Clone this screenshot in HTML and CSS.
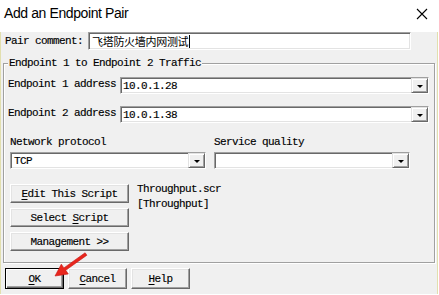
FILE: index.html
```html
<!DOCTYPE html>
<html lang="en">

<head>
    <meta charset="UTF-8">
    <meta name="viewport" content="width=device-width, initial-scale=1.0">
    <title>Add an Endpoint Pair</title>
    <link rel="stylesheet" href="styles.css">
</head>

<body>
    <div class="window">
        <div class="titlebar">
            <span class="title">Add an Endpoint Pair</span>
            <svg class="close" width="12" height="12" viewBox="0 0 12 12">
                <path d="M1 1 L11 11 M11 1 L1 11" stroke="#000" stroke-width="1.1" fill="none" />
            </svg>
        </div>

        <div class="client">
            <div class="comment-row">
                <span class="comment-label">Pair comment:</span>
                <div class="edit">
                    <span class="cjk">飞塔防火墙内网测试</span><span class="caret"></span>
                </div>
            </div>

            <div class="group">
                <span class="group-title">Endpoint 1 to Endpoint 2 Traffic</span>

                <div class="addr-row first">
                    <span class="addr-label">Endpoint 1 address</span>
                    <div class="combo addr-combo">
                        <span class="value">10.0.1.28</span>
                        <span class="drop"><i></i></span>
                    </div>
                </div>
                <div class="addr-row">
                    <span class="addr-label">Endpoint 2 address</span>
                    <div class="combo addr-combo">
                        <span class="value">10.0.1.38</span>
                        <span class="drop"><i></i></span>
                    </div>
                </div>

                <div class="proto-row">
                    <div class="field">
                        <span class="field-label">Network protocol</span>
                        <div class="combo">
                            <span class="value">TCP</span>
                            <span class="drop"><i></i></span>
                        </div>
                    </div>
                    <div class="field">
                        <span class="field-label">Service quality</span>
                        <div class="combo">
                            <span class="value"></span>
                            <span class="drop"><i></i></span>
                        </div>
                    </div>
                </div>

                <div class="script-row">
                    <div class="script-buttons">
                        <button class="btn"><u>E</u>dit This Script</button>
                        <button class="btn">Select <u>S</u>cript</button>
                        <button class="btn">Management &gt;&gt;</button>
                    </div>
                    <div class="script-info">
                        <div>Throughput.scr</div>
                        <div>[Throughput]</div>
                    </div>
                </div>
            </div>

            <div class="footer">
                <button class="btn big default"><u>O</u>K</button>
                <button class="btn big"><u>C</u>ancel</button>
                <button class="btn big"><u>H</u>elp</button>
            </div>
        </div>

        <!-- red pointer drawn over the dialog -->
        <svg class="arrow" width="439" height="295" viewBox="0 0 439 295">
            <polygon points="86.9,255.2 85.1,252.8 63.9,267.9 61.3,264.2 55,276 68.3,274 65.7,270.3"
                fill="#e8261d" stroke="#c81410" stroke-width="0.6" stroke-linejoin="round" />
        </svg>
    </div>
</body>

</html>
```

FILE: styles.css
```css
body {
    margin: 0;
    background: #fff;
    font-family: "Liberation Mono", "DejaVu Sans Mono", monospace;
    font-size: 11px;
    letter-spacing: -0.6px;
    color: #000;
    -webkit-text-stroke: 0.15px #000;
}

.window {
    position: relative;
    width: 438px;
    height: 294px;
}

.titlebar {
    height: 26px;
    display: flex;
    align-items: center;
    justify-content: space-between;
    padding: 0 10px 0 4px;
    background: #fff;
}

.title {
    font-family: "Liberation Sans", Arial, sans-serif;
    font-size: 14px;
    letter-spacing: -0.4px;
    line-height: 16px;
    -webkit-text-stroke: 0;
}

.close {
    display: block;
    margin-top: 1px;
}

.client {
    height: 267px;
    background: #f0f0f0;
    border: 1px solid #e2dfae;
    border-top: 0;
}

/* pair comment */

.comment-row {
    display: flex;
    align-items: center;
    margin-top: 6px;
    padding-left: 4px;
}

.comment-label {
    width: 83px;
    line-height: 12px;
}

.edit {
    box-sizing: border-box;
    width: 323px;
    height: 18px;
    display: flex;
    align-items: center;
    padding-left: 3px;
    background: #fff;
    border: 1px solid;
    border-color: #a0a0a0 #fff #fff #a0a0a0;
    box-shadow: inset 1px 1px 0 #696969, inset -1px -1px 0 #e3e3e3;
}

.cjk {
    font-family: "Noto Sans CJK SC", sans-serif;
    font-size: 11px;
    letter-spacing: -0.3px;
    line-height: 14px;
    -webkit-text-stroke: 0;
}

.caret {
    width: 1px;
    height: 13px;
    background: #000;
    margin-left: 1px;
}

/* group box */

.group {
    box-sizing: border-box;
    width: 432px;
    margin: 13px 0 0 2px;
    padding: 0 5px 11px 4px;
    display: flex;
    flex-direction: column;
    border: 1px solid #a0a0a0;
    box-shadow: 1px 1px 0 #fff, inset 1px 1px 0 #fff;
}

.group-title {
    align-self: flex-start;
    margin-top: -7px;
    padding: 0 1px;
    line-height: 13px;
    background: #f0f0f0;
}

.addr-row {
    display: flex;
    align-items: center;
    margin-top: 12px;
}

.addr-row.first {
    margin-top: 7px;
}

.addr-label {
    width: 112px;
    line-height: 12px;
    margin-top: -3px;
}

.combo {
    box-sizing: border-box;
    width: 196px;
    height: 17px;
    display: flex;
    align-items: center;
    justify-content: space-between;
    background: #fff;
    border: 1px solid;
    border-color: #a0a0a0 #fff #fff #a0a0a0;
    box-shadow: inset 1px 1px 0 #696969, inset -1px -1px 0 #e3e3e3;
}

.addr-combo {
    width: 309px;
}

.value {
    padding-left: 2px;
    line-height: 12px;
}

.drop {
    box-sizing: border-box;
    width: 17px;
    height: 15px;
    display: flex;
    align-items: center;
    justify-content: center;
    background: #f0f0f0;
    border: 1px solid;
    border-color: #e3e3e3 #696969 #696969 #e3e3e3;
    box-shadow: inset 1px 1px 0 #fff, inset -1px -1px 0 #a0a0a0;
}

.drop i {
    width: 0;
    height: 0;
    margin-top: 2px;
    border-left: 3px solid transparent;
    border-right: 3px solid transparent;
    border-top: 3px solid #000;
}

.proto-row {
    display: flex;
    gap: 8px;
    margin-top: 13px;
    padding-left: 2px;
}

.field {
    display: flex;
    flex-direction: column;
    gap: 4px;
}

.field .value {
    padding-left: 3px;
}

.field-label {
    line-height: 12px;
}

/* script buttons */

.script-row {
    display: flex;
    margin-top: 15px;
    padding-left: 2px;
}

.script-buttons {
    display: flex;
    flex-direction: column;
    gap: 5px;
    width: 119px;
}

.script-info {
    margin: -2px 0 0 8px;
    line-height: 15px;
}

.btn {
    box-sizing: border-box;
    height: 19px;
    padding: 0;
    font: inherit;
    letter-spacing: inherit;
    color: #000;
    background: #f0f0f0;
    border: 1px solid;
    border-color: #fff #696969 #696969 #fff;
    box-shadow: inset -1px -1px 0 #a0a0a0, inset 1px 1px 0 #e3e3e3;
}

.btn u {
    text-underline-offset: 2px;
}

/* footer */

.footer {
    display: flex;
    gap: 4px;
    margin-top: 5px;
    padding-left: 4px;
}

.btn.big {
    width: 59px;
    height: 21px;
}

.btn.default {
    border-color: #000;
    box-shadow: inset 1px 1px 0 #fff, inset -1px -1px 0 #696969, inset -2px -2px 0 #a0a0a0;
}

.arrow {
    position: absolute;
    left: 0;
    top: 0;
    pointer-events: none;
}
```
